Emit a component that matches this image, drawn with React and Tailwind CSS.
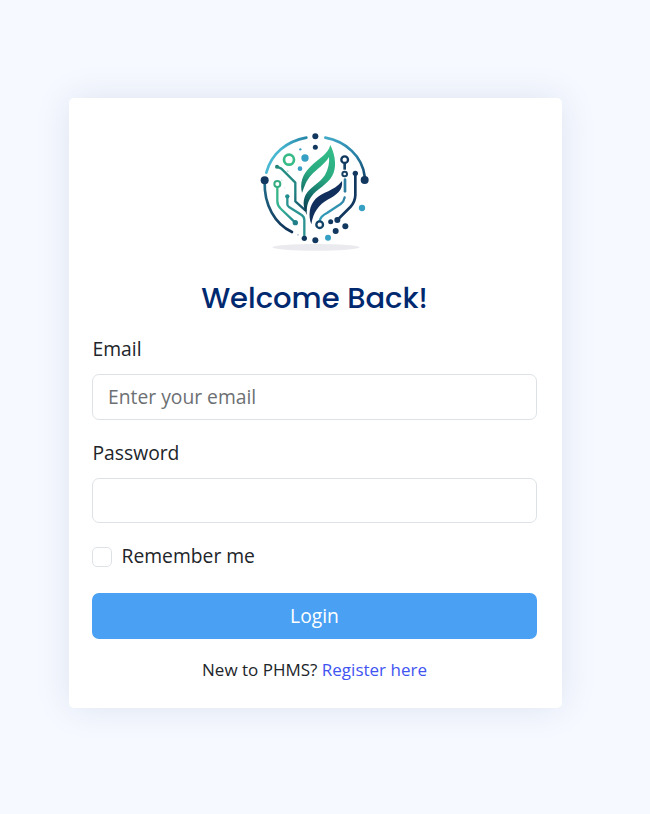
function Logo() {
  return (
    <svg className="mx-auto block h-[130px] w-[130px] shrink-0" viewBox="0 0 390 390" fill="none" strokeLinecap="round" strokeLinejoin="round">
      <defs>
        <linearGradient id="arcLeft" x1="170" y1="38" x2="48" y2="142" gradientUnits="userSpaceOnUse">
          <stop stopColor="#2786a8" /><stop offset=".5" stopColor="#45b5d0" /><stop offset="1" stopColor="#4cb9d3" />
        </linearGradient>
        <linearGradient id="arcRight" x1="226" y1="38" x2="344" y2="150" gradientUnits="userSpaceOnUse">
          <stop stopColor="#42a9c9" /><stop offset=".65" stopColor="#277fa5" /><stop offset="1" stopColor="#164b71" />
        </linearGradient>
        <linearGradient id="arcBottom" x1="44" y1="170" x2="128" y2="322" gradientUnits="userSpaceOnUse">
          <stop stopColor="#216f8c" /><stop offset=".6" stopColor="#174869" /><stop offset="1" stopColor="#0d2f56" />
        </linearGradient>
        <linearGradient id="leaf" x1="235" y1="70" x2="165" y2="250" gradientUnits="userSpaceOnUse">
          <stop stopColor="#32bd88" /><stop offset=".45" stopColor="#2aaa81" /><stop offset=".8" stopColor="#126a68" /><stop offset="1" stopColor="#0b4053" />
        </linearGradient>
        <linearGradient id="trace" x1="82" y1="185" x2="136" y2="293" gradientUnits="userSpaceOnUse">
          <stop stopColor="#39b883" /><stop offset=".55" stopColor="#35b195" /><stop offset="1" stopColor="#20828c" />
        </linearGradient>
        <linearGradient id="branch" x1="80" y1="125" x2="166" y2="255" gradientUnits="userSpaceOnUse">
          <stop stopColor="#279283" /><stop offset=".6" stopColor="#218282" /><stop offset="1" stopColor="#164e68" />
        </linearGradient>
        <linearGradient id="rightTrace" x1="285" y1="165" x2="209" y2="285" gradientUnits="userSpaceOnUse">
          <stop stopColor="#235d83" /><stop offset=".5" stopColor="#3291b1" /><stop offset="1" stopColor="#309bb8" />
        </linearGradient>
      </defs>
      <ellipse cx="198" cy="367" rx="131" ry="10" fill="#ebebef" />
      <path d="M49 143C64 85 110 49 169 38" stroke="url(#arcLeft)" strokeWidth="8" />
      <path d="M226 38C287 49 337 94 344 154" stroke="url(#arcRight)" strokeWidth="8" />
      <path d="M44 170C42 240 75 297 126 321" stroke="url(#arcBottom)" strokeWidth="8" />
      <path d="M81 125L94 131L136 173V229L166 256" stroke="url(#branch)" strokeWidth="7" />
      <path d="M82 188V229Q82 242 93 252L136 293" stroke="url(#trace)" strokeWidth="7" />
      <path d="M112 215V238Q112 243 117 246L155 270Q163 275 163 286V338" stroke="#2b9392" strokeWidth="7" />
      <path d="M241 60C258 94 260 130 246 154C232 179 201 192 184 215C172 231 169 249 171 270C158 247 157 221 172 202C187 183 211 172 225 150C235 133 239 112 237 96C224 118 201 132 184 150C169 166 163 185 156 204C149 173 157 149 181 125C209 98 234 88 241 60Z" fill="url(#leaf)" />
      <path d="M276 168C280 196 259 210 235 223C205 240 190 262 184 298C174 270 178 241 197 221C217 201 252 199 276 168Z" fill="#102f5c" />
      <path d="M284 117V134" stroke="#174165" strokeWidth="8" strokeLinecap="butt" />
      <path d="M285 164V199" stroke="#2e7da1" strokeWidth="8" />
      <path d="M284 217Q282 229 272 237L231 264Q211 274 209 288" stroke="url(#rightTrace)" strokeWidth="7" />
      <path d="M316 148V211Q315 231 301 246L262 285" stroke="#12385f" strokeWidth="8" />
      <circle cx="117" cy="104" r="15" stroke="#37bb86" strokeWidth="8" />
      <circle cx="82" cy="177" r="9" stroke="#35ad80" strokeWidth="6" />
      <circle cx="284" cy="104" r="10" stroke="#10375e" strokeWidth="7" />
      <circle cx="284" cy="147" r="7" stroke="#174165" strokeWidth="6" />
      <circle cx="209" cy="299" r="10" stroke="#104268" strokeWidth="7" />
      <g fill="#123860">
        <circle cx="196" cy="34" r="9" /><circle cx="196" cy="67" r="7.5" /><circle cx="44" cy="166" r="12" /><circle cx="344" cy="165" r="12" />
        <circle cx="316" cy="145" r="8" /><circle cx="163" cy="340" r="8" /><circle cx="196" cy="346" r="9" />
        <circle cx="242" cy="290" r="7.5" /><circle cx="262" cy="285" r="9" /><circle cx="286" cy="304" r="9" /><circle cx="257" cy="318" r="9" />
      </g>
      <g fill="#369fc4">
        <circle cx="165" cy="99" r="11" /><circle cx="150" cy="131" r="7" /><circle cx="151" cy="73" r="3.5" /><circle cx="336" cy="249" r="9.5" /><circle cx="234" cy="338" r="9" />
      </g>
      <circle cx="112" cy="214" r="6.5" fill="#218f91" />
      <circle cx="136" cy="293" r="8" fill="#207f88" />
      <circle cx="81" cy="125" r="6" fill="#238477" />
      <circle cx="144" cy="329" r="3" fill="#c3cfdd" />
      <circle cx="113" cy="139" r="3" fill="#b6e5df" />
      <circle cx="95" cy="166" r="2.5" fill="#c9e9e4" />
      <circle cx="104" cy="189" r="2.5" fill="#dcebee" />
    </svg>
  );
}

export default function App() {
  return (
    <main className="flex h-[814px] w-[650px] items-start overflow-hidden bg-[#f6f9ff] pl-[69px] pt-[98px] font-['Open_Sans','Noto_Sans',sans-serif] text-[19.3px] leading-7 text-[#212529]">
      <section className="flex h-[610px] w-[493px] flex-col rounded-[5px] bg-white pl-[23px] pr-[25px] pt-[27px] shadow-[0_0_36px_rgba(1,41,112,0.1)]">
        <div className="flex"><Logo /></div>
        <h1 className="mt-[22px] text-center font-['Poppins','Inter',sans-serif] text-[29px] font-medium leading-[42px] text-[#012970]">Welcome Back!</h1>
        <form className="flex flex-col" onSubmit={(e) => e.preventDefault()}>
          <label htmlFor="email" className="mt-4 pl-[0.5px]">Email</label>
          <input id="email" type="email" placeholder="Enter your email" className="mt-[11px] h-[46px] w-full rounded-[7px] border border-[#dee2e6] bg-white px-[15px] pb-px placeholder:text-[#6c6f73]" />
          <label htmlFor="password" className="mt-[19px] pl-[0.5px]">Password</label>
          <input id="password" type="password" className="mt-[11px] h-[45px] w-full rounded-[7px] border border-[#dee2e6] bg-white px-[15px]" />
          <label className="mt-5 flex items-center gap-[9.5px]">
            <input type="checkbox" className="size-5 appearance-none rounded-[5px] border border-[#dee2e6] bg-white" />
            <span className="-mt-px">Remember me</span>
          </label>
          <button className="mt-[23px] h-[46px] w-full rounded-[7px] bg-[#4aa1f3] text-white">Login</button>
        </form>
        <p className="mt-[17px] text-center text-[17px]">New to PHMS? <a href="#" className="text-[#4154f1]">Register here</a></p>
      </section>
    </main>
  );
}
